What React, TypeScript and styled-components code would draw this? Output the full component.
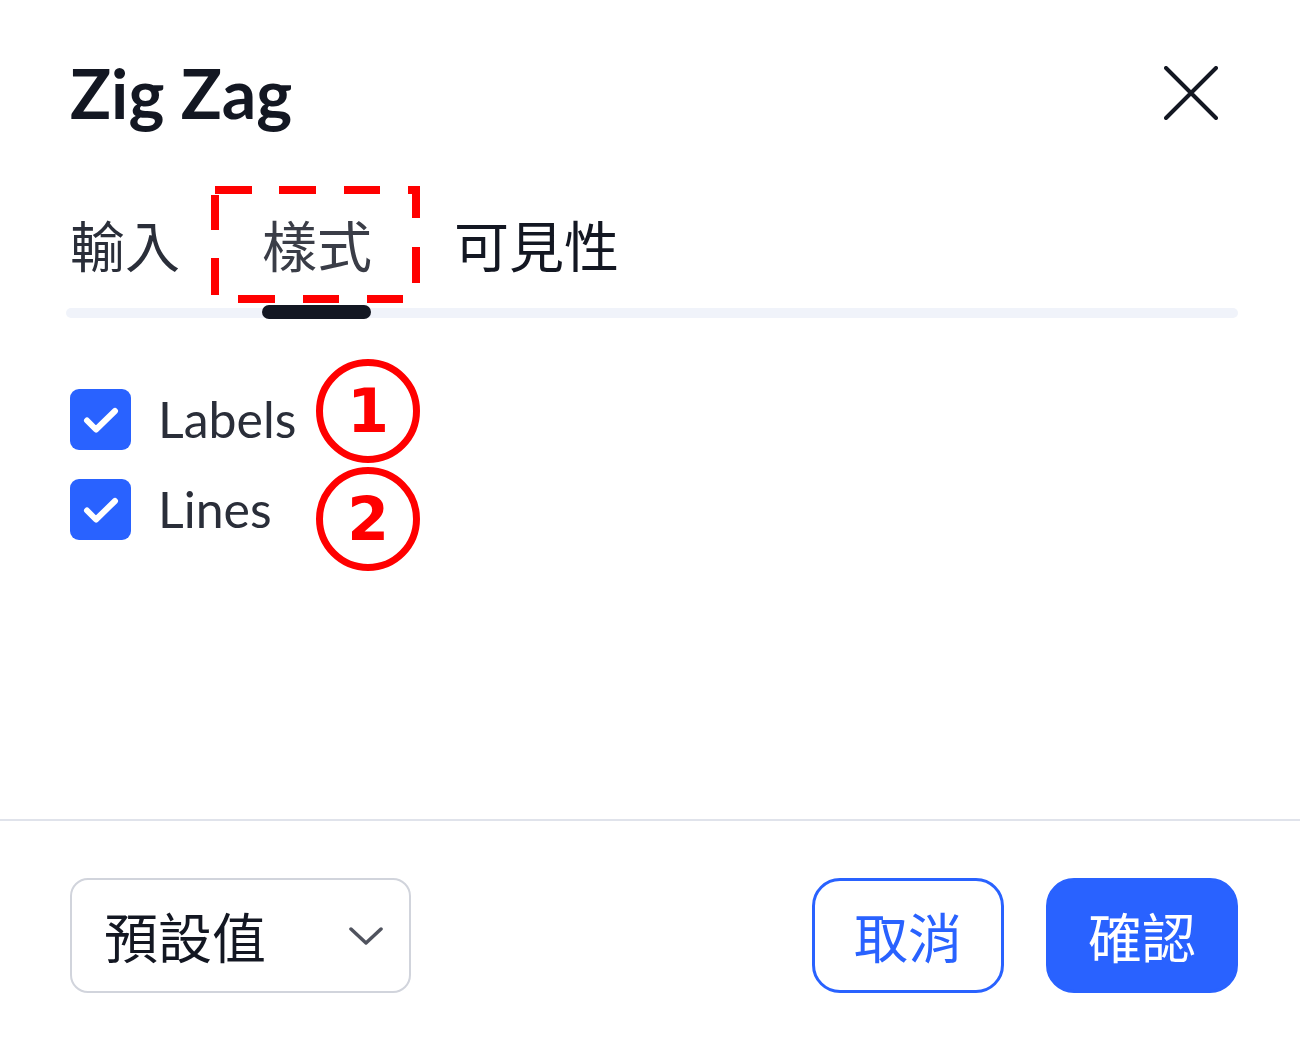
import React from 'react';
import styled, { createGlobalStyle } from 'styled-components';

const GlobalStyle = createGlobalStyle`
    html, body {
        margin: 0;
        padding: 0;
        background: #fff;
    }
    body {
        font-family: Lato, "Noto Sans CJK TC", sans-serif;
        color: #131722;
    }
`;

const CJK = `"Noto Sans CJK TC", "Noto Sans", sans-serif`;

const Dialog = styled.div`
    width: 1300px;
    height: 100vh;
    display: flex;
    flex-direction: column;
    box-sizing: border-box;
    overflow: hidden;
`;

const Header = styled.div`
    display: flex;
    align-items: center;
    justify-content: space-between;
    padding: 51px 62px 0 70px;
`;

const Title = styled.h1`
    margin: 0;
    font-family: Lato, sans-serif;
    font-weight: 700;
    font-size: 68px;
    line-height: 84px;
    color: #131722;
`;

const CloseButton = styled.button`
    border: 0;
    background: none;
    padding: 0;
    margin-right: 20px;
    width: 54px;
    height: 54px;
    display: flex;
    cursor: pointer;
`;

const Tabs = styled.div`
    padding: 75px 62px 0 70px;
`;

const TabRow = styled.div`
    position: relative;
    display: flex;
    gap: 82px;
`;

const Tab = styled.div<{ $tone: string }>`
    font-family: ${CJK};
    font-size: 55px;
    line-height: 66px;
    color: ${p => p.$tone};
    white-space: nowrap;
`;

const DashedMark = styled.svg`
    position: absolute;
    left: 141px;
    top: -24px;
    pointer-events: none;
`;

const Track = styled.div`
    position: relative;
    margin: 32px 0 0 -4px;
    height: 10px;
    border-radius: 5px;
    background: #f0f3fa;
`;

const Indicator = styled.div`
    position: absolute;
    left: 196px;
    top: -3px;
    width: 109px;
    height: 14px;
    border-radius: 7px;
    background: #131722;
`;

const Body = styled.div`
    flex: 1;
    padding: 71px 70px 0;
`;

const CheckList = styled.div`
    position: relative;
    display: flex;
    flex-direction: column;
    gap: 29px;
`;

const CheckRow = styled.label`
    display: flex;
    align-items: center;
    gap: 27px;
    height: 61px;
`;

const Box = styled.span`
    width: 61px;
    height: 61px;
    border-radius: 9px;
    background: #2962ff;
    display: flex;
    align-items: center;
    justify-content: center;
    flex-shrink: 0;
`;

const CheckText = styled.span`
    font-family: Lato, sans-serif;
    font-size: 50px;
    line-height: 61px;
    color: #2a2e39;
`;

const NumberMark = styled.div<{ $top: number }>`
    position: absolute;
    left: 246px;
    top: ${p => p.$top}px;
    width: 90px;
    height: 90px;
    border: 7px solid #ff0000;
    border-radius: 50%;
    display: flex;
    align-items: center;
    justify-content: center;
    font-family: "DejaVu Sans", sans-serif;
    font-weight: 700;
    font-size: 60px;
    color: #ff0000;
`;

const Divider = styled.div`
    height: 2px;
    background: #e0e3eb;
`;

const Footer = styled.div`
    display: flex;
    align-items: center;
    padding: 57px 62px 46px 70px;
`;

const Select = styled.div`
    box-sizing: border-box;
    width: 341px;
    height: 115px;
    border: 2px solid #d1d4dc;
    border-radius: 18px;
    display: flex;
    align-items: center;
    justify-content: space-between;
    padding: 0 26px 0 32px;
    font-family: ${CJK};
    font-size: 54px;
    color: #131722;
`;

const Spacer = styled.div`
    flex: 1;
`;

const Button = styled.button<{ $primary?: boolean }>`
    box-sizing: border-box;
    width: 192px;
    height: 115px;
    border-radius: 28px;
    border: 3px solid #2962ff;
    background: ${p => (p.$primary ? '#2962ff' : '#fff')};
    color: ${p => (p.$primary ? '#fff' : '#2962ff')};
    font-family: ${CJK};
    font-size: 54px;
    padding: 0;
    margin-left: ${p => (p.$primary ? '42px' : '0')};
    cursor: pointer;
`;

const Check = () => (
    <svg width="36" height="28" viewBox="0 0 36 28">
        <path d="M4 14.5l9 9L32 5" fill="none" stroke="#fff" strokeWidth="6" strokeLinecap="round" strokeLinejoin="round" />
    </svg>
);

// dashes of the red annotation frame, edge by edge
const dashes = [
    'M4 4H41M68 4H105M133 4H169M197 4H209',
    'M205 0V32M205 61V97',
    'M27 113H64M92 113H128M156 113H192',
    'M4 9V44M4 72V109',
].join('');

const App = () => {
    return (
        <Dialog>
            <GlobalStyle />
            <Header>
                <Title>Zig Zag</Title>
                <CloseButton aria-label="close">
                    <svg width="54" height="54" viewBox="0 0 54 54">
                        <path d="M2 2L52 52M52 2L2 52" stroke="#131722" strokeWidth="4" strokeLinecap="round" />
                    </svg>
                </CloseButton>
            </Header>
            <Tabs>
                <TabRow>
                    <Tab $tone="#2a2e39">輸入</Tab>
                    <Tab $tone="#3a3d47">樣式</Tab>
                    <Tab $tone="#131722">可見性</Tab>
                    <DashedMark width="209" height="117">
                        <path d={dashes} fill="none" stroke="#ff0000" strokeWidth="8" />
                    </DashedMark>
                </TabRow>
                <Track>
                    <Indicator />
                </Track>
            </Tabs>
            <Body>
                <CheckList>
                    <CheckRow>
                        <Box><Check /></Box>
                        <CheckText>Labels</CheckText>
                    </CheckRow>
                    <CheckRow>
                        <Box><Check /></Box>
                        <CheckText>Lines</CheckText>
                    </CheckRow>
                    <NumberMark $top={-30}>1</NumberMark>
                    <NumberMark $top={78}>2</NumberMark>
                </CheckList>
            </Body>
            <Divider />
            <Footer>
                <Select>
                    預設值
                    <svg width="34" height="18" viewBox="0 0 34 18">
                        <path d="M2 2l15 14L32 2" fill="none" stroke="#50535e" strokeWidth="3.5" strokeLinecap="round" strokeLinejoin="round" />
                    </svg>
                </Select>
                <Spacer />
                <Button>取消</Button>
                <Button $primary>確認</Button>
            </Footer>
        </Dialog>
    );
};

export default App;
